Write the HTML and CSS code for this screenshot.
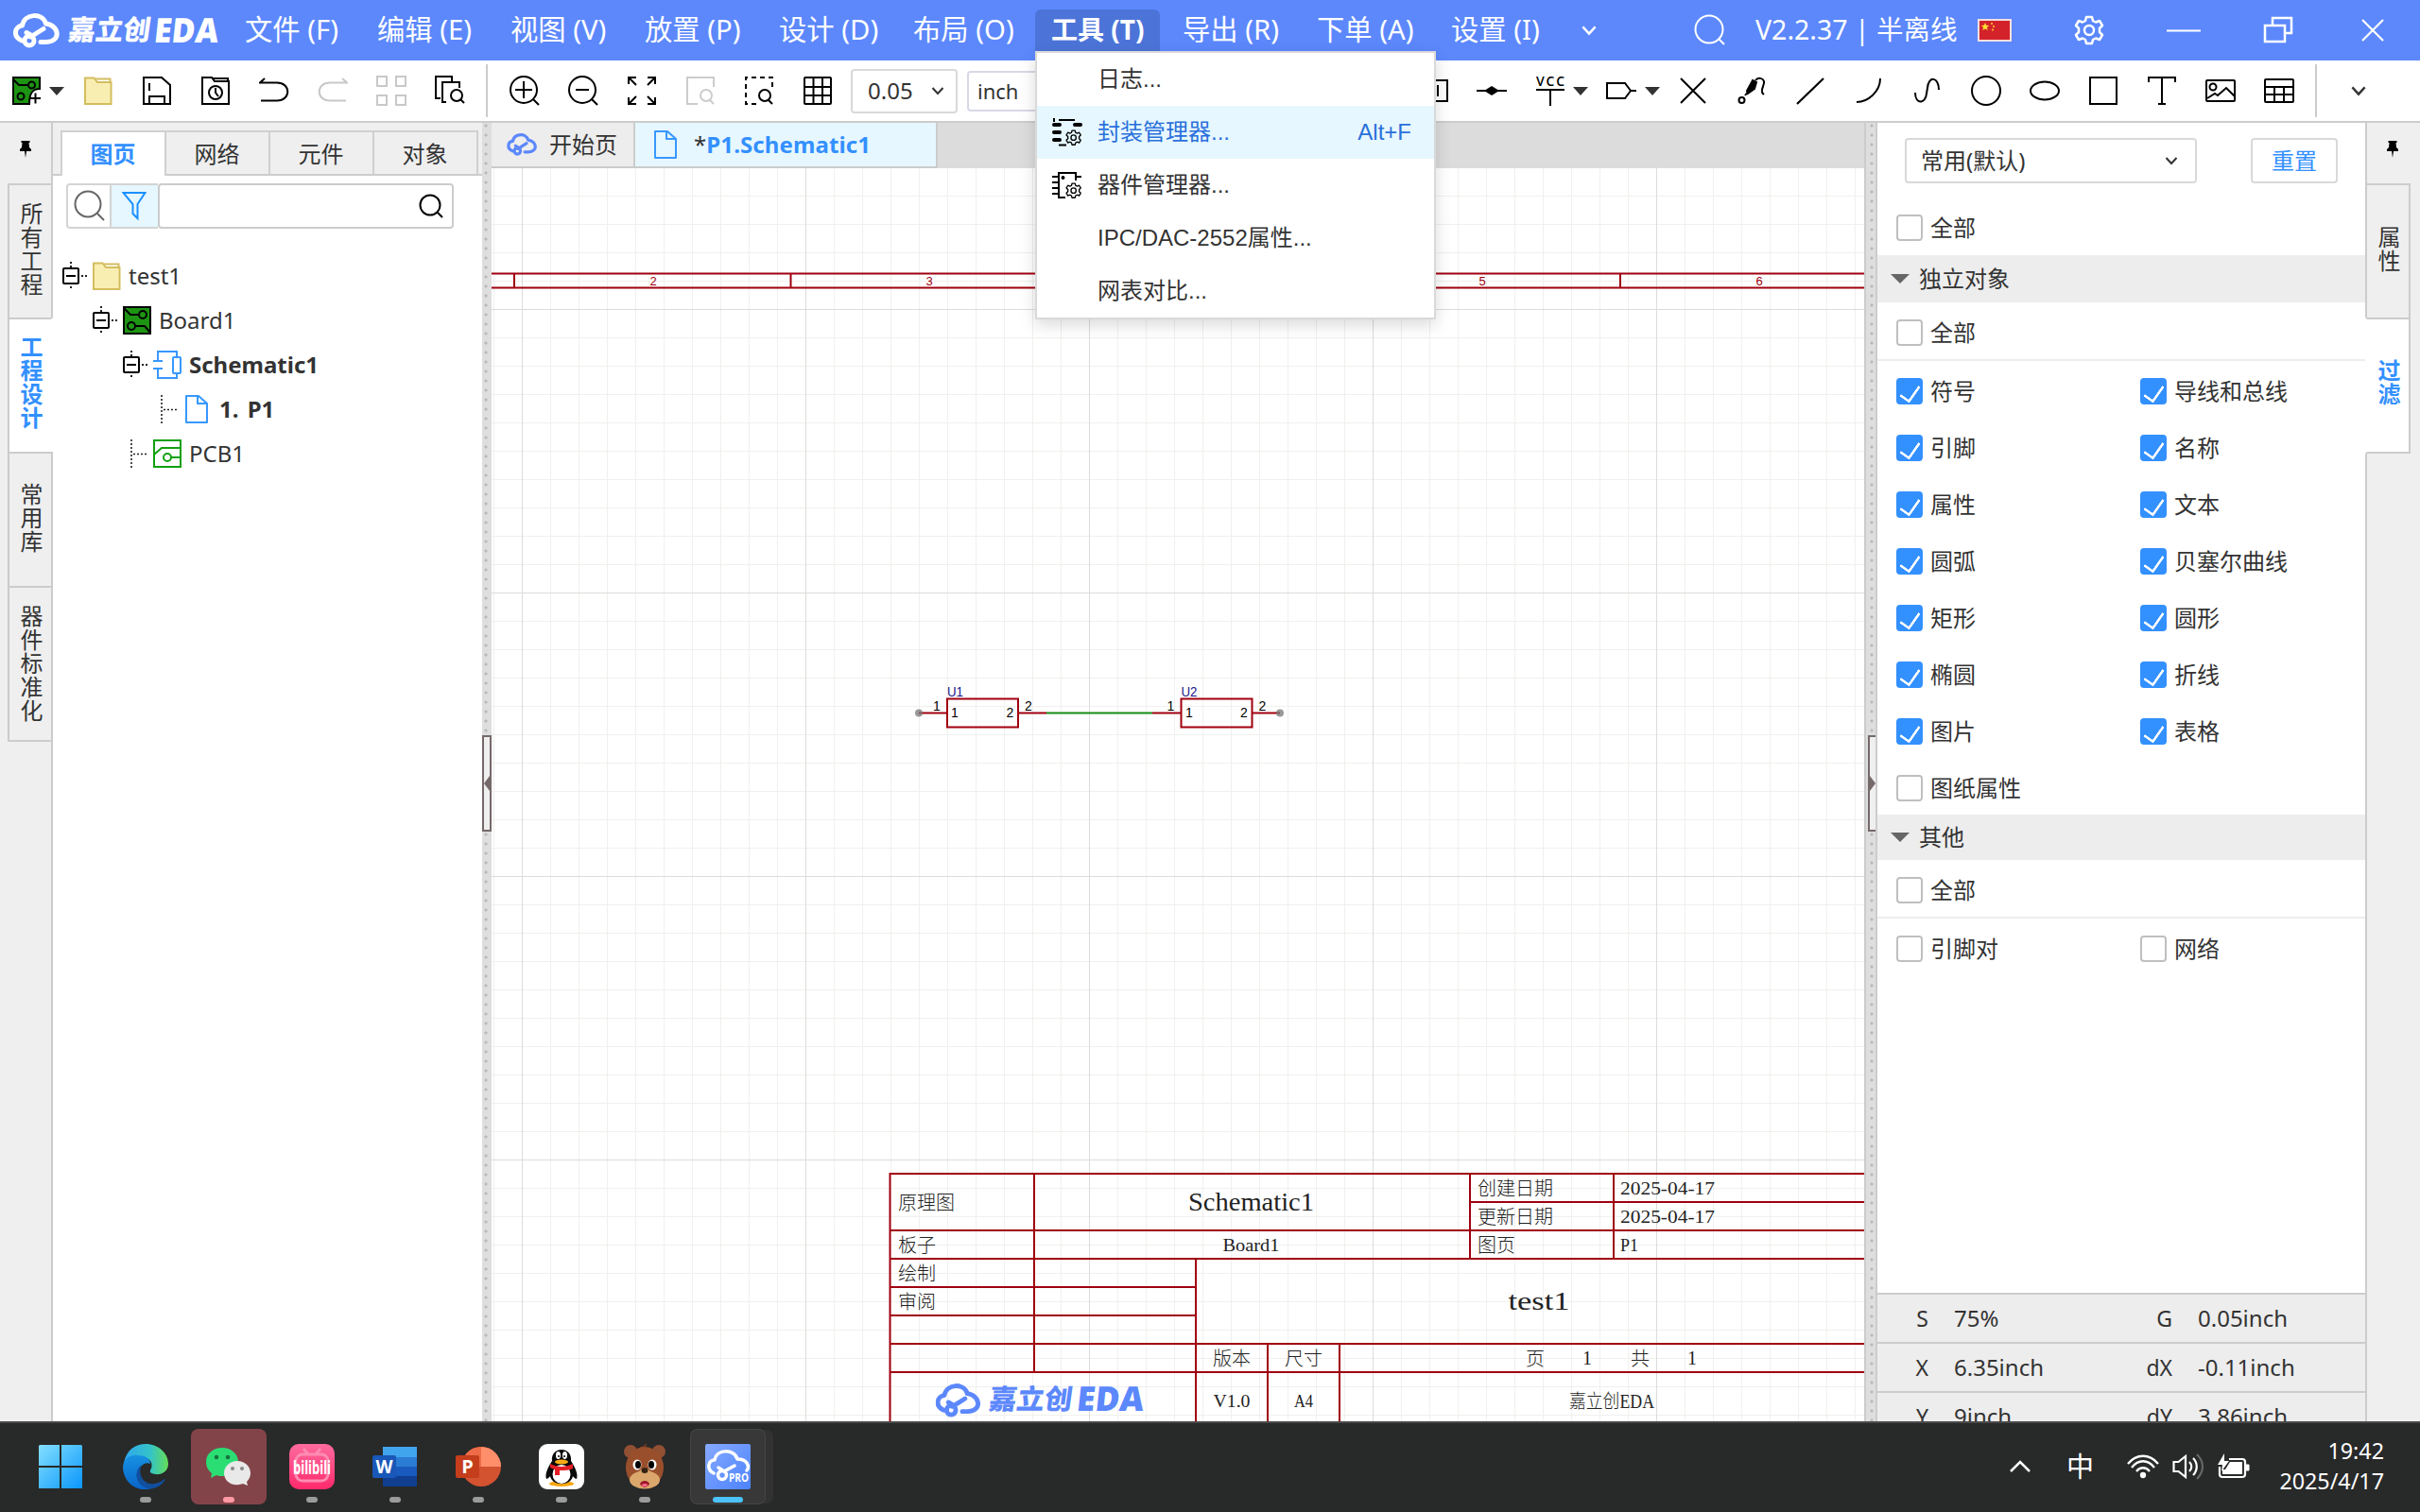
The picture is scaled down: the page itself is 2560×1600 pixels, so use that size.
FILE: index.html
```html
<!DOCTYPE html>
<html lang="zh-CN">
<head>
<meta charset="utf-8">
<title>嘉立创EDA</title>
<link rel="stylesheet" href="styles.css">
</head>
<body>
<svg class="defs" width="0" height="0" aria-hidden="true">
  <symbol id="cloud" viewBox="0 0 50 37">
    <g fill="none" stroke="currentColor" stroke-width="5" stroke-linecap="round" stroke-linejoin="round">
      <path d="M9 29C-.5 25 1 14 9.500 13C12 0 31 -1 34.500 11C49 13 51 30 35 30.500L29 30.500"/>
      <circle cx="17" cy="29" r="5"/><path d="M14 20.500L20 24L32 16.500M18 25L20 24"/>
    </g>
  </symbol>
  <symbol id="folder" viewBox="0 0 30 30"><path d="M1 29V1.500h9.500L14 6h14.500v23z" fill="#f9eeb2" stroke="#d4bd5e" stroke-width="2"/><path d="M12 2.500h15.500V6M14 6h14" fill="none" stroke="#d4bd5e" stroke-width="2"/></symbol>
  <symbol id="page" viewBox="0 0 24 30"><path d="M1 1h13l9 8v20H1zM13 1v8h10" fill="none" stroke="#3798ff" stroke-width="2" stroke-linejoin="round"/></symbol>
  <symbol id="node" viewBox="0 0 28 30"><rect x="1" y="7" width="16" height="16" rx="1" fill="none" stroke="#000" stroke-width="2"/><path d="M4 15h10" stroke="#000" stroke-width="2"/><path d="M9 0v6M9 26v4M20 15h8" stroke="#222" stroke-width="2" stroke-dasharray="2 2"/></symbol>
  <symbol id="leaf" viewBox="0 0 28 30"><path d="M9 0v30M11 15.500h16" stroke="#222" stroke-width="1.600" stroke-dasharray="2 2"/></symbol>
  <symbol id="gear" viewBox="0 0 32 32"><path d="M13 2h6l1 4 3 1.500 4-1.500 3 5-3 3v4l3 3-3 5-4-1.500-3 1.500-1 4h-6l-1-4-3-1.500L5 26l-3-5 3-3v-4l-3-3 3-5 4 1.500L12 6z" fill="none" stroke="currentColor" stroke-width="2.500" stroke-linejoin="round"/><circle cx="16" cy="16" r="5" fill="none" stroke="currentColor" stroke-width="2.500"/></symbol>
  <symbol id="pin" viewBox="0 0 12 18"><path d="M1.500 0h9v2H9.500l.5 5 2 2v2H7l-1 7-1-7H0V9l2-2 .5-5H1.500z" fill="#000"/></symbol>
  <symbol id="down" viewBox="0 0 14 10"><path d="M1.500 2l5.500 6 5.500-6" fill="none" stroke="currentColor" stroke-width="2"/></symbol>
</svg>

<header class="titlebar">
  <div class="brand">
    <svg width="50" height="37"><use href="#cloud"/></svg>
    <svg class="brand-text" width="170" height="56"><text transform="translate(7 38) skewX(-8)" textLength="87" lengthAdjust="spacingAndGlyphs">嘉立创</text><text class="en" transform="translate(98 41) skewX(-6)" textLength="68" lengthAdjust="spacingAndGlyphs">EDA</text></svg>
  </div>
  <nav class="menus">
    <span>文件 (F)</span><span>编辑 (E)</span><span>视图 (V)</span><span>放置 (P)</span><span>设计 (D)</span><span>布局 (O)</span><span class="open">工具 (T)</span><span>导出 (R)</span><span>下单 (A)</span><span>设置 (I)</span>
    <svg width="18" height="12"><use href="#down"/></svg>
  </nav>
  <div class="window-tools">
    <svg width="34" height="34" fill="none" stroke="#fff" stroke-width="2"><circle cx="16" cy="16" r="14.500"/><path d="M26 26l6 6"/></svg>
    <span class="version">V2.2.37 | 半离线</span>
    <svg class="flag" width="36" height="24"><rect width="36" height="24" fill="#f4dede"/><rect x="2" y="2" width="32" height="20" fill="#d3222a"/><path d="M8 4l1.200 2.800 3 .2-2.300 2 .8 3L8 10.400 5.300 12l.8-3-2.300-2 3-.2z" fill="#fd3"/><path d="M14 4h2v2h-2zM16 7h2v2h-2zM15 10.500h2v2h-2z" fill="#f7a72f"/></svg>
    <svg class="cog" width="32" height="32"><use href="#gear"/></svg>
    <svg class="min" width="36" height="3"><path d="M0 1.500h36" stroke="#fff" stroke-width="2"/></svg>
    <svg class="restore" width="32" height="30" fill="none" stroke="#fff" stroke-width="2.500"><path d="M2 10h21v17H2zM10 9V2h20v16h-6"/></svg>
    <svg class="close" width="24" height="24" stroke="#fff" stroke-width="2.200"><path d="M1 1l22 22M23 1L1 23"/></svg>
  </div>
</header>

<div class="toolbar">
  <div class="tools first">
    <svg width="30" height="30"><path d="M1 1h28v12c-8 0-11 5-11 16H1z" fill="#1d9412" stroke="#000" stroke-width="2"/><g fill="none" stroke="#000" stroke-width="2"><path d="M1 3l6 6h10"/><circle cx="20.500" cy="9" r="3.500"/><circle cx="9" cy="21" r="3.500"/></g><path d="M19 23h11M24.500 17.500v11" stroke="#000" stroke-width="2"/></svg>
    <i class="caret board-caret"></i>
    <svg width="30" height="30"><use href="#folder"/></svg>
    <svg width="30" height="30" fill="none" stroke="#000" stroke-width="2"><path d="M1 1h19l9 8v20H1zM7 29v-8h16v8M7 7v8"/></svg>
    <svg width="30" height="30" fill="none" stroke="#000" stroke-width="2"><path d="M1 29V1h10l3 4h15v24zM12 2h16v4"/><circle cx="15" cy="17" r="7"/><path d="M15 12v5l3 4"/></svg>
    <svg width="32" height="28" fill="none" stroke="#000" stroke-width="2"><path d="M6 1L1 5.500h18c15 0 15 19 0 19H2"/></svg>
    <svg width="32" height="28" fill="none" stroke="#c8c8c8" stroke-width="2"><path d="M26 1l5 4.500H13c-15 0-15 19 0 19h17"/></svg>
    <svg width="32" height="32" fill="none" stroke="#c8c8c8" stroke-width="2"><path d="M1 1h10v10H1zM21 1h10v10H21zM1 21h10v10H1zM21 21h10v10H21z"/></svg>
    <svg width="32" height="32" fill="none" stroke="#000" stroke-width="2"><path d="M6 24H1V1h17v5M12 28H8V7h18v6"/><circle cx="23" cy="21" r="6"/><path d="M27 25l4 4"/></svg>
  </div>
  <b class="rule"></b>
  <div class="tools view">
    <svg width="32" height="32" fill="none" stroke="#000" stroke-width="2"><circle cx="15" cy="15" r="14"/><path d="M6 15h18M15 6v18M25 25l6 6"/></svg>
    <svg width="32" height="32" fill="none" stroke="#000" stroke-width="2"><circle cx="15" cy="15" r="14"/><path d="M8 15h14M25 25l6 6"/></svg>
    <svg width="30" height="30" fill="none" stroke="#000" stroke-width="2"><path d="M1 8V1h8M1 1l8 8M21 1h8v7M29 1l-8 8M1 22v7h8M1 29l8-8M21 29h8v-7M29 29l-8-8"/></svg>
    <svg width="30" height="30" fill="none" stroke="#ccc" stroke-width="2"><path d="M12 29H1V1h28v10"/><circle cx="21" cy="20" r="6"/><path d="M25 25l4 4"/></svg>
    <svg width="30" height="30" fill="none" stroke="#000" stroke-width="2"><path d="M12 29H1V1h28v13" stroke-dasharray="5 4"/><circle cx="21" cy="20" r="6"/><path d="M25 25l4 4"/></svg>
    <svg width="30" height="30" fill="none" stroke="#000" stroke-width="2"><rect x="1" y="1" width="28" height="28" rx="1"/><path d="M1 11h28M1 20h28M10.500 1v28M20 1v28"/></svg>
  </div>
  <div class="field grid-size">0.05<svg width="14" height="10"><use href="#down"/></svg></div>
  <div class="field unit">inch</div>
  <div class="tools draw">
    <svg class="part" width="32" height="24" fill="none" stroke="#000" stroke-width="2"><path d="M1 1h30v22H1zM21 6v12"/></svg>
    <svg width="32" height="32"><path d="M0 16h32" stroke="#000" stroke-width="2"/><path d="M8 16l8-5 8 5-8 5z" fill="#000"/></svg>
    <svg class="nudge6" width="32" height="34"><text x="1" y="12" class="vcc" textLength="30">VCC</text><path d="M1 16h30M16 16v17" stroke="#000" stroke-width="2"/></svg>
    <i class="caret"></i>
    <svg class="nudge10" width="32" height="32" fill="none" stroke="#000" stroke-width="2"><path d="M1 8h19l6 8-6 8H1zM26 16h6"/></svg>
    <i class="caret"></i>
    <svg class="nudge5" width="28" height="28" stroke="#000" stroke-width="2"><path d="M1 1l26 26M27 1L1 27"/></svg>
    <svg width="32" height="32" fill="none" stroke="#000" stroke-width="2"><circle cx="5.500" cy="26" r="3"/><path d="M9 21l4-5M20 5C23 1 28 3 29 6c1 4-3 7-2 11 0 2 1 2 2 3"/><path d="M17 5l4 2-2 7-7 5-1-3z" fill="#000"/></svg>
    <svg width="30" height="30"><path d="M1 29L29 2" stroke="#000" stroke-width="2.200"/></svg>
    <svg width="28" height="28" fill="none" stroke="#000" stroke-width="2"><path d="M1 26C13 26 26 15 26 1"/></svg>
    <svg width="28" height="28" fill="none" stroke="#000" stroke-width="2"><path d="M1 16c0 13 11 12 12 1l1-6C15-2 26-1 26 13"/></svg>
    <svg width="32" height="32" fill="none" stroke="#000" stroke-width="2"><circle cx="16" cy="16" r="15"/></svg>
    <svg width="32" height="32" fill="none" stroke="#000" stroke-width="2"><ellipse cx="16" cy="16" rx="15" ry="9.500"/></svg>
    <svg width="30" height="30" fill="none" stroke="#000" stroke-width="2"><path d="M1 1h28v28H1z"/></svg>
    <svg width="30" height="30" fill="none" stroke="#000" stroke-width="2"><path d="M1 6V1h28v5M15 1v28M11 29h8"/></svg>
    <svg width="32" height="26" fill="none" stroke="#000" stroke-width="2"><rect x="1" y="2" width="30" height="22" rx="1"/><circle cx="8" cy="9" r="3.500"/><path d="M2 21l8-5 3 2 9-8 9 9"/></svg>
    <svg width="32" height="28" fill="none" stroke="#000" stroke-width="2"><rect x="1" y="2" width="30" height="24" rx="1"/><path d="M1 10h30M1 18h30M11 10v16M21 10v16"/></svg>
  </div>
  <b class="rule"></b>
  <svg class="more" width="18" height="12"><use href="#down"/></svg>
</div>

<main class="workspace">
  <aside class="rail left-rail">
    <div class="pin"><svg width="12" height="18"><use href="#pin"/></svg></div>
    <div class="vtab">所有工程</div><div class="vtab on">工程设计</div><div class="vtab">常用库</div><div class="vtab tall">器件标准化</div>
    <div class="rest"></div>
  </aside>

  <section class="project">
    <div class="ptabs"><span class="on">图页</span><span>网络</span><span>元件</span><span>对象</span></div>
    <div class="filter">
      <span class="find"><svg width="34" height="34" fill="none" stroke="#666" stroke-width="2"><circle cx="15" cy="15" r="13.500"/><path d="M25 25l7 7"/></svg></span>
      <span class="funnel"><svg width="26" height="32" fill="none" stroke="#1b90ff" stroke-width="2"><path d="M1.500 2h23l-8 12v15l-5-5V14z"/></svg></span>
      <span class="query"><svg width="26" height="26" fill="none" stroke="#000" stroke-width="2"><circle cx="12" cy="12" r="10.500"/><path d="M19 19l6 6"/></svg></span>
    </div>
    <ul class="tree">
      <li><svg width="28" height="30"><use href="#node"/></svg><svg class="ico" width="30" height="30"><use href="#folder"/></svg>test1</li>
      <li class="l1"><svg width="28" height="30"><use href="#node"/></svg><svg class="ico" width="30" height="30" fill="none" stroke="#000" stroke-width="2"><path d="M1 1h28v28H1z" fill="#1d9412"/><path d="M1 2l7 7h9M29 28l-6-7H13"/><circle cx="21" cy="9" r="4"/><circle cx="9" cy="21" r="4"/></svg>Board1</li>
      <li class="l2 strong"><svg width="28" height="30"><use href="#node"/></svg><svg class="ico" width="30" height="30" fill="none" stroke="#3798ff" stroke-width="2"><path d="M5 11V1h20v6M5 19v10h20v-5M0 11h10M0 19h10"/><rect x="21" y="7" width="8" height="17" rx="1"/></svg>Schematic1</li>
      <li class="l3 strong"><svg width="28" height="30"><use href="#leaf"/></svg><svg class="ico leafpage" width="24" height="30"><use href="#page"/></svg>1. P1</li>
      <li class="l2"><svg width="28" height="30"><use href="#leaf"/></svg><svg class="ico" width="30" height="30" fill="none" stroke="#11a00f" stroke-width="2"><path d="M1 1h28v28H1zM1 16l8-7h20M19 19h10"/><circle cx="15" cy="19" r="4"/></svg>PCB1</li>
    </ul>
  </section>

  <div class="splitter"><div class="grip"><svg width="6" height="16"><path d="M6 0v16L0 8z" fill="#75696a"/></svg></div></div>

  <section class="editor">
    <div class="docs">
      <div class="doc home"><svg width="33" height="24"><use href="#cloud"/></svg>开始页</div>
      <div class="doc current"><svg width="24" height="30"><use href="#page"/></svg><span><em>*</em>P1.Schematic1</span></div>
    </div>
    <svg class="sheet" width="1452" height="1326" viewBox="520 178 1452 1326">
      <defs>
        <pattern id="minor" x="522" y="207" width="30" height="30" patternUnits="userSpaceOnUse"><path d="M.5 0v30M0 .5h30" stroke="#f0f0ee"/></pattern>
        <pattern id="major" x="552" y="327" width="300" height="300" patternUnits="userSpaceOnUse"><path d="M.5 0v300M0 .5h300" stroke="#dcdcda"/></pattern>
      </defs>
      <rect x="520" y="178" width="1452" height="1326" fill="#fff"/>
      <rect x="520" y="178" width="1452" height="1326" fill="url(#minor)"/>
      <rect x="520" y="178" width="1452" height="1326" fill="url(#major)"/>
      <g class="frame">
        <path d="M520 289.500H1972M520 304.500H1972M544 289.500v15M836.500 289.500v15M1129 289.500v15M1421.500 289.500v15M1714 289.500v15"/>
        <g class="zone"><text x="691" y="302">2</text><text x="983" y="302">3</text><text x="1568" y="302">5</text><text x="1861" y="302">6</text></g>
      </g>
      <g class="part-lines"><path d="M1002 739.500h75v30h-75zM1249.500 739.500h75v30h-75zM972 754.500h30M1077 754.500h30M1219 754.500h30M1324 754.500h30"/></g>
      <path d="M1107 754.500H1219" stroke="#128c12" stroke-width="2"/>
      <g fill="#777" fill-opacity=".75"><circle cx="972" cy="754.500" r="4"/><circle cx="1354" cy="754.500" r="4"/></g>
      <g class="ref"><text x="1002" y="737" textLength="17" lengthAdjust="spacingAndGlyphs">U1</text><text x="1249.500" y="737" textLength="17" lengthAdjust="spacingAndGlyphs">U2</text></g>
      <g class="pinno"><text x="987" y="752">1</text><text x="1006" y="759">1</text><text x="1064.500" y="759">2</text><text x="1084" y="752">2</text><text x="1234.500" y="752">1</text><text x="1254" y="759">1</text><text x="1312" y="759">2</text><text x="1331.500" y="752">2</text></g>
      <g class="block">
        <path d="M940.500 1242H1972M1555 1272H1972M940.500 1302H1972M940.500 1332H1972M940.500 1362H1265M940.500 1392H1265M940.500 1422H1972M940.500 1452H1972M941.500 1242V1504M1094 1242V1452M1265 1332V1504M1341 1422V1504M1417 1422V1504M1555 1242V1332M1707 1242V1332"/>
        <g class="cn"><text x="950" y="1280">原理图</text><text x="950" y="1325">板子</text><text x="950" y="1355">绘制</text><text x="950" y="1385">审阅</text><text x="1563" y="1265">创建日期</text><text x="1563" y="1295">更新日期</text><text x="1563" y="1325">图页</text></g>
        <g class="cn mid"><text x="1303" y="1445">版本</text><text x="1379" y="1445">尺寸</text><text x="1624" y="1445">页</text><text x="1735" y="1445">共</text><text x="1679" y="1444">1</text><text x="1790" y="1444">1</text><text x="1705" y="1490" textLength="90" lengthAdjust="spacingAndGlyphs">嘉立创EDA</text></g>
        <g class="val"><text x="1714" y="1264" textLength="100" lengthAdjust="spacingAndGlyphs">2025-04-17</text><text x="1714" y="1294" textLength="100" lengthAdjust="spacingAndGlyphs">2025-04-17</text><text x="1714" y="1324" textLength="19" lengthAdjust="spacingAndGlyphs">P1</text></g>
        <g class="val mid"><text x="1323.500" y="1324" textLength="60" lengthAdjust="spacingAndGlyphs">Board1</text><text x="1303" y="1489" textLength="39" lengthAdjust="spacingAndGlyphs">V1.0</text><text x="1379" y="1489" textLength="20" lengthAdjust="spacingAndGlyphs">A4</text></g>
        <g class="big mid"><text x="1323.500" y="1281" textLength="133" lengthAdjust="spacingAndGlyphs">Schematic1</text><text x="1628" y="1386" textLength="65" lengthAdjust="spacingAndGlyphs">test1</text></g>
        <svg class="mark" x="989" y="1464" width="50" height="36" viewBox="0 0 50 37"><use href="#cloud"/></svg>
        <g class="logo-text"><text transform="translate(1045 1491) skewX(-8)" textLength="88" lengthAdjust="spacingAndGlyphs">嘉立创</text><text class="en" transform="translate(1138 1493) skewX(-6)" textLength="71" lengthAdjust="spacingAndGlyphs">EDA</text></g>
      </g>
    </svg>
  </section>

  <div class="splitter right"><div class="grip"><svg width="6" height="16"><path d="M0 0v16l6-8z" fill="#75696a"/></svg></div></div>

  <section class="inspector">
    <div class="preset"><div class="select">常用(默认)<svg width="14" height="10"><use href="#down"/></svg></div><div class="reset">重置</div></div>
    <div class="check top"><i></i>全部</div>
    <h3><i class="caret"></i>独立对象</h3>
    <div class="check all"><i></i>全部</div>
    <div class="checks">
      <div class="check"><i class="y"></i>符号</div><div class="check"><i class="y"></i>导线和总线</div>
      <div class="check"><i class="y"></i>引脚</div><div class="check"><i class="y"></i>名称</div>
      <div class="check"><i class="y"></i>属性</div><div class="check"><i class="y"></i>文本</div>
      <div class="check"><i class="y"></i>圆弧</div><div class="check"><i class="y"></i>贝塞尔曲线</div>
      <div class="check"><i class="y"></i>矩形</div><div class="check"><i class="y"></i>圆形</div>
      <div class="check"><i class="y"></i>椭圆</div><div class="check"><i class="y"></i>折线</div>
      <div class="check"><i class="y"></i>图片</div><div class="check"><i class="y"></i>表格</div>
      <div class="check"><i></i>图纸属性</div>
    </div>
    <h3 class="second"><i class="caret"></i>其他</h3>
    <div class="check all"><i></i>全部</div>
    <div class="checks"><div class="check"><i></i>引脚对</div><div class="check"><i></i>网络</div></div>
    <div class="readout">
      <div><b>S</b><span>75%</span><b>G</b><span>0.05inch</span></div>
      <div><b>X</b><span>6.35inch</span><b>dX</b><span>-0.11inch</span></div>
      <div><b>Y</b><span>9inch</span><b>dY</b><span>3.86inch</span></div>
    </div>
  </section>

  <aside class="rail right-rail">
    <div class="pin"><svg width="12" height="18"><use href="#pin"/></svg></div>
    <div class="vtab">属性</div><div class="vtab on">过滤</div>
    <div class="rest"></div>
  </aside>
</main>

<div class="dropdown">
  <div>日志...</div>
  <div class="hot"><svg width="34" height="30" fill="none" stroke="#000"><path d="M3 0v4M8 2h17" stroke-width="2"/><path d="M3 7h6M25 7h6M3 15h6M3 23h6" stroke-width="4" stroke-linecap="round"/><path d="M8 28.500h8" stroke-width="2"/><g transform="translate(15 12) scale(.54)"><use href="#gear" width="32" height="32"/></g></svg>封装管理器...<kbd>Alt+F</kbd></div>
  <div><svg width="34" height="30" fill="none" stroke="#000" stroke-width="2"><path d="M15 28H8V2h18v8M1 6h7M1 12h7M1 18h7M1 24h7M26 6h6"/><circle cx="12.500" cy="7" r="1"/><g transform="translate(15 12) scale(.54)"><use href="#gear" width="32" height="32"/></g></svg>器件管理器...</div>
  <div>IPC/DAC-2552属性...</div>
  <div>网表对比...</div>
</div>

<footer class="taskbar">
  <div class="apps">
    <div class="app start"><svg width="46" height="46"><defs><linearGradient id="win" x1="0" y1="0" x2="46" y2="46" gradientUnits="userSpaceOnUse"><stop stop-color="#84e0ff"/><stop offset="1" stop-color="#0a96fb"/></linearGradient></defs><path d="M1 0h21v22H0V1zM24 0h21l1 1v21H24zM0 24h22v22H0zM24 24h22v22H24z" fill="url(#win)"/></svg></div>
    <div class="app run"><svg width="48" height="48"><defs><linearGradient id="e1"><stop stop-color="#2fa6ee"/><stop offset=".6" stop-color="#35c3c8"/><stop offset="1" stop-color="#64dd55"/></linearGradient><linearGradient id="e2" x2="0" y2="1"><stop stop-color="#1792e2"/><stop offset="1" stop-color="#0964c8"/></linearGradient></defs><path d="M1 20C4 6 13 0 24 0c14 0 24 10 24 21 0 8-7 12-14 11-6-1-6-3-4-6 3-8-5-13-13-13C9 13 4 17 1 20z" fill="url(#e1)"/><path d="M0 24C1 15 8 11 16 12c9 0 13 5 13 9-7-3-12 4-12 10 0 8 6 14 14 16C14 52 0 40 0 24z" fill="url(#e2)"/><path d="M20 22c-5 10 2 22 14 20 5-1 8-3 10-5 1 0 1 1 0 2-5 7-12 9-18 8-13-3-15-19-6-25z" fill="#114f9f"/></svg></div>
    <div class="app run alert"><svg width="48" height="42"><path d="M17 1c9 0 17 6 17 15S26 31 17 31c-2 0-4 0-6-1l-6 3 1-5C2 25 0 21 0 16 0 7 8 1 17 1z" fill="#2ade74"/><circle cx="11" cy="11" r="2.300" fill="#16743c"/><circle cx="23" cy="11" r="2.300" fill="#16743c"/><path d="M33 15c8 0 14 6 14 13 0 4-2 7-4 9l1 4-5-2c-12 4-20-3-20-11 0-7 6-13 14-13z" fill="#e9e9e9"/><circle cx="28" cy="23" r="2" fill="#888"/><circle cx="38" cy="23" r="2" fill="#888"/></svg></div>
    <div class="app run"><svg width="48" height="48"><defs><linearGradient id="b" x2="0" y2="1"><stop stop-color="#ff6b9f"/><stop offset="1" stop-color="#ff2a6c"/></linearGradient></defs><rect width="48" height="48" rx="10" fill="url(#b)"/><rect x="7" y="11" width="34" height="28" rx="7" fill="none" stroke="#ff8cb2" stroke-width="3"/><path d="M15 5l5 6M33 5l-5 6" stroke="#ff8cb2" stroke-width="3"/><text x="4" y="32" class="bili" textLength="40" lengthAdjust="spacingAndGlyphs">bilibili</text></svg></div>
    <div class="app run"><svg width="48" height="42"><path d="M11 0h36v11H11z" fill="#41a5ee"/><path d="M11 11h36v10H11z" fill="#2b7cd3"/><path d="M11 21h36v10H11z" fill="#185abd"/><path d="M11 31h36v11H11z" fill="#103f91"/><rect y="9" width="25" height="24" rx="2" fill="#1957b8"/><text x="12.500" y="28" class="office" textLength="18" lengthAdjust="spacingAndGlyphs">W</text></svg></div>
    <div class="app run"><svg width="48" height="42"><circle cx="27" cy="21" r="21" fill="#d35230"/><path d="M27 0a21 21 0 0 1 21 21H27z" fill="#ff8f6b"/><path d="M27 0v21H6A21 21 0 0 1 27 0z" fill="#ed6c47"/><rect y="9" width="25" height="24" rx="2" fill="#c43e1c"/><text x="12.500" y="28" class="office">P</text></svg></div>
    <div class="app run"><svg width="48" height="48"><rect width="48" height="48" rx="9" fill="#fff"/><ellipse cx="24" cy="42" rx="13" ry="3" fill="#f8a60f"/><path d="M14 18C12 2 36 2 34 18c4 6 8 14 6 19-2 0-4-3-4-3-2 11-22 11-24 0 0 0-2 3-4 3-2-5 2-13 6-19z" fill="#090909"/><ellipse cx="24" cy="32" rx="9.500" ry="10" fill="#fff"/><ellipse cx="20.500" cy="12" rx="2.500" ry="4" fill="#fff"/><ellipse cx="27.500" cy="12" rx="2.500" ry="4" fill="#fff"/><circle cx="21" cy="13" r="1"/><circle cx="27" cy="13" r="1"/><ellipse cx="24" cy="19" rx="7" ry="2.500" fill="#faab14"/><path d="M12 21c8 4 16 4 24 0v5c-4 2-9 2-14 2v5h-5v-6l-5-2z" fill="#e71d24"/></svg></div>
    <div class="app run"><svg width="46" height="48"><circle cx="8" cy="8" r="7" fill="#925033"/><circle cx="38" cy="8" r="7" fill="#925033"/><path d="M18 4c4 0 6-1 6-4" fill="none" stroke="#713921" stroke-width="2"/><ellipse cx="23" cy="25" rx="20" ry="22" fill="#9a4f2c"/><ellipse cx="23" cy="38" rx="16" ry="9.500" fill="#dba76c"/><path d="M10 34c5-1 9-9 13-9s8 8 13 9z" fill="#dba76c"/><ellipse cx="15" cy="22" rx="4.500" ry="5.500" fill="#fff"/><ellipse cx="31" cy="22" rx="4.500" ry="5.500" fill="#fff"/><ellipse cx="16" cy="22" rx="3" ry="4"/><ellipse cx="30" cy="22" rx="3" ry="4"/><ellipse cx="23" cy="28" rx="3.500" ry="3" fill="#321"/><path d="M18 42c2-4 8-4 10 0-2 5-8 5-10 0z" fill="#9c1729"/><ellipse cx="23" cy="43.500" rx="3" ry="1.500" fill="#ff6b8c"/></svg></div>
    <div class="app run active"><svg width="48" height="48"><defs><linearGradient id="eda" x2="1" y2="1"><stop stop-color="#86a9ff"/><stop offset="1" stop-color="#4c83fd"/></linearGradient></defs><rect width="48" height="48" rx="2" fill="url(#eda)"/><g fill="none" stroke="#fff" stroke-width="3.500" stroke-linecap="round" stroke-linejoin="round"><path d="M9 31C1 27 3 17 10 17 12 5 31 5 34 16c11 0 13 8 10 12"/><circle cx="18" cy="33" r="4.500"/><path d="M14 25l6 4 11-6"/></g><text x="25" y="40" class="pro" textLength="21" lengthAdjust="spacingAndGlyphs">PRO</text></svg></div>
  </div>
  <div class="tray">
    <svg class="up" width="24" height="14" fill="none" stroke="#fff" stroke-width="2.500"><path d="M2 12L12 2l10 10"/></svg>
    <span class="ime">中</span>
    <svg class="wifi" width="34" height="26" fill="none" stroke="#fff" stroke-width="2.300"><path d="M1 10C10-1 24-1 33 10M5 14c7-9 17-9 24 0M10 18c4-5 10-5 14 0"/><circle cx="17" cy="22" r="2" fill="#fff"/></svg>
    <svg class="vol" width="34" height="28" fill="none" stroke="#fff" stroke-width="2.200"><path d="M1.500 9h5L14 3v22l-7.500-6h-5zM18 9c3 3 3 7 0 10M22 5c5 5 5 13 0 18"/><path d="M26 1c8 8 8 18 0 26" stroke="#666"/></svg>
    <svg class="bat" width="34" height="28" fill="none" stroke="#fff" stroke-width="2.200"><path d="M12 6h14q3 0 3 3v13q0 3-3 3H5q-3 0-3-3V14"/><path d="M13 9h13v13H5v-5h3z" fill="#fff" stroke="none"/><path d="M30 12h3v6h-3z" fill="#fff" stroke="#fff" stroke-width="1"/><path d="M7 0L0 12h5l-1 7 8-11H7z" fill="#fff" stroke="none"/></svg>
    <div class="clock"><span>19:42</span><span>2025/4/17</span></div>
  </div>
</footer>
</body>
</html>
```
FILE: styles.css
```css
* { box-sizing: border-box; }

body {
  margin: 0;
  width: 2560px;
  height: 1600px;
  overflow: hidden;
  display: flex;
  flex-direction: column;
  position: relative;
  font: 24px/1 "Noto Sans", "Noto Sans CJK SC", sans-serif;
  color: #333;
  background: #fff;
}

svg { display: block; flex: none; }
.defs { position: absolute; }

/* title bar */
.titlebar {
  height: 64px;
  flex: none;
  display: flex;
  background: #5c88fc;
  color: #fff;
  font-size: 29.3px;
}
.brand { width: 259px; flex: none; padding-left: 14px; display: flex; align-items: center; }
.brand-text { overflow: visible; }
.brand-text, .logo-text { font: 900 29px "Noto Sans CJK SC", sans-serif; fill: #fff; }
.brand-text .en, .logo-text .en { font: 800 36px "Open Sans", sans-serif; }
.menus {
  display: grid;
  grid-template-columns: 140px 141px 142px 142px 142px 129px 132px 24px 142px 142px 137px 24px;
  align-items: center;
  padding-bottom: 1px;
  line-height: 1.3;
  white-space: nowrap;
}
.menus .open {
  align-self: start;
  margin-top: 10px;
  height: 44px;
  padding-left: 17px;
  line-height: 43px;
  border-radius: 6px 6px 0 0;
  background: #4c74d8;
  font-weight: 700;
  font-size: 28px;
}
.menus .open + span { grid-column: 9; }
.window-tools { margin-left: 96px; display: flex; align-items: center; }
.version { width: 234px; margin-left: 31px; padding-bottom: 1px; white-space: nowrap; font-size: 28.5px; }
.flag { margin-left: 1px; }
.cog { margin-left: 66px; }
.min { margin-left: 66px; }
.restore { margin-left: 66px; }
.close { margin-left: 72px; }

/* toolbar */
.toolbar {
  height: 66px;
  flex: none;
  display: flex;
  align-items: center;
  border-bottom: 2px solid #ccc;
  background: #fff;
}
.tools { display: grid; grid-auto-flow: column; grid-auto-columns: 62px; align-items: center; justify-items: center; }
.tools.first { margin-left: 13px; grid-template-columns: 30px 30px; width: 493px; }
.board-caret { justify-self: end; margin-right: 5px; }
.caret { display: block; border: 8px solid transparent; border-top: 9px solid #333; border-bottom: 0; }
.rule { width: 2px; height: 56px; background: #ccc; }
.first + .rule { margin-left: 8px; }
.draw + .rule { margin-left: 7px; }
.tools.view { margin-left: 8px; }
.field {
  flex: none;
  display: flex;
  align-items: center;
  border: 2px solid #d9d9d9;
  border-radius: 4px;
  color: #333;
}
.grid-size { margin-left: 4px; width: 113px; height: 47px; padding: 0 12px 0 16px; justify-content: space-between; }
.unit { margin-left: 10px; width: 100px; height: 43px; padding-left: 9px; border-color: #d7d8e6; font-size: 22px; }
.tools.draw { margin-left: 362px; grid-template-columns: 62px 62px 56px 14px 62px 14px 67px; }
.nudge5 { margin-left: 5px; }
.nudge6 { margin-left: 6px; }
.nudge10 { margin-left: 10px; }
.vcc { font: 600 14px "Open Sans", sans-serif; }
.more { margin-left: 35px; }

/* side rails */
.workspace { flex: 1; min-height: 0; display: flex; overflow: hidden; }
.rail { width: 56px; flex: none; display: flex; flex-direction: column; background: #efefef; }
.left-rail { padding-left: 8px; }
.rail.right-rail { width: 58px; padding-right: 10px; }
.rail .pin { height: 64px; padding: 19px 0 0 13px; }
.right-rail .pin { padding-left: 21px; }
.rail .pin, .rail .rest { border-right: 2px solid #ccc; }
.right-rail .pin, .right-rail .rest { border-right: 0; border-left: 2px solid #ccc; }
.rest { flex: 1; }
.vtab {
  height: 142px;
  flex: none;
  padding-bottom: 4px;
  border: 2px solid #ccc;
  border-bottom: 0;
  writing-mode: vertical-rl;
  text-orientation: upright;
  display: flex;
  align-items: center;
  justify-content: center;
  letter-spacing: 1px;
}
.vtab.tall { height: 165px; padding-bottom: 1px; border-bottom: 2px solid #ccc; }
.vtab.on { padding-bottom: 6px; background: #fff; border-right-color: #fff; color: #3390ff; font-weight: 700; }
.right-rail .vtab.on { height: 144px; border-right-color: #ccc; border-left-color: #fff; border-bottom: 2px solid #ccc; }

/* project tree */
.project { width: 454px; flex: none; background: #fff; }
.ptabs { height: 56px; padding: 8px 0 0 8px; display: flex; background: #efefef; border-bottom: 2px solid #ccc; }
.ptabs span {
  width: 110px;
  height: 46px;
  padding-right: 1px;
  border: 2px solid #d0d0d0;
  border-width: 2px 2px 0 0;
  text-align: center;
  line-height: 45px;
}
.ptabs .on { width: 112px; height: 48px; border-left-width: 2px; background: #fff; color: #3390ff; font-weight: 700; }
.filter { margin: 8px 0 0 14px; width: 410px; height: 48px; display: flex; }
.filter span { display: flex; align-items: center; border: 2px solid #d4d4d4; }
.find { width: 48px; padding-left: 6px; border-radius: 4px 0 0 4px; }
.funnel { width: 49px; padding-right: 2px; justify-content: center; background: #e6f7ff; }
.filter .funnel { border-left: 0; border-right: 0; }
.filter .query { width: 313px; justify-content: flex-end; padding-right: 9px; border-radius: 4px; border-color: #ccc; }
.tree { margin: 26px 0 0; padding: 0 0 0 10px; list-style: none; }
.tree li { height: 47px; display: flex; align-items: center; white-space: nowrap; line-height: 45px; }
.tree .ico { margin: 0 8px 0 4px; }
.tree .leafpage { margin: 0 12px 0 6px; }
.tree .l1 { padding-left: 32px; }
.tree .l2 { padding-left: 64px; }
.tree .l3 { padding-left: 96px; word-spacing: 3px; }
.strong { font-weight: 700; }

/* splitters */
.splitter {
  width: 10px;
  flex: none;
  display: flex;
  flex-direction: column;
  background: radial-gradient(circle at 4px 3px, #b9b9b9 1.3px, transparent 1.8px) 0 0 / 10px 10px, #dedede;
}
.splitter .grip {
  margin-top: 648px;
  height: 102px;
  display: flex;
  align-items: center;
  border: 2px solid #75696a;
  background: #efefef;
}
.splitter.right {
  width: 14px;
  padding-left: 4px;
  border-left: 2px solid #ccc;
  border-right: 2px solid #ccc;
  background-position: 2px 0;
  background-clip: padding-box;
}
.right .grip { margin-left: -2px; border-right: 0; }

/* editor */
.editor { width: 1452px; flex: none; }
.docs { height: 48px; display: flex; background: #dcdcdc; }
.doc { display: flex; align-items: center; border-right: 2px solid #ccc; border-bottom: 2px solid #ccc; }
.home { width: 152px; padding-left: 16px; gap: 12px; background: #ededed; }
.home svg { color: #5c88fc; }
.current { width: 320px; padding-left: 20px; gap: 18px; background: #e6f7ff; color: #3390ff; font-weight: 700; letter-spacing: .1px; }
.current em { font-style: normal; font-weight: 400; color: #333; }
.frame path, .part-lines path, .block path { fill: none; stroke: #a0000f; stroke-width: 2; }
.zone { font: 13px "Liberation Sans", sans-serif; fill: #a0000f; text-anchor: middle; }
.ref { font: 15px "Liberation Sans", sans-serif; fill: #15158a; }
.pinno { font: 14px "Liberation Sans", sans-serif; fill: #000; }
.cn { font: 300 20px "Liberation Serif", "Noto Sans CJK SC", sans-serif; fill: #222; }
.val { font: 19.5px "Liberation Serif", serif; fill: #222; }
.big { font: 27px "Liberation Serif", serif; fill: #222; }
.mid { text-anchor: middle; }
.block .mark { color: #5c88fc; }
.block .mark path { stroke: currentColor; }
.logo-text { fill: #5c88fc; }

/* inspector */
.inspector { width: 516px; flex: none; display: flex; flex-direction: column; background: #fff; }
.preset { height: 64px; padding: 16px 29px 0; display: flex; justify-content: space-between; }
.select, .reset { height: 48px; border: 2px solid #d9d9d9; border-radius: 4px; display: flex; align-items: center; }
.select { width: 309px; padding: 0 18px 0 15px; justify-content: space-between; }
.reset { width: 92px; justify-content: center; color: #3390ff; }
.check { display: flex; align-items: center; gap: 8px; white-space: nowrap; }
.check i { width: 28px; height: 28px; border: 2px solid #bfbfbf; border-radius: 4px; background: #fff; }
.check i.y { border-color: #3390ff; background: #3390ff; display: flex; justify-content: center; }
.check i.y::after {
  content: "";
  width: 10px;
  height: 18px;
  margin-top: 2px;
  border: solid #fff;
  border-width: 0 3px 3px 0;
  border-radius: 1px;
  transform: rotate(35deg);
}
.check.top { height: 58px; margin-top: 18px; padding-left: 20px; }
.inspector h3 {
  margin: 0;
  height: 50px;
  padding-left: 14px;
  display: flex;
  align-items: center;
  gap: 10px;
  font-weight: 400;
  font-size: 24px;
  background: #ededed;
}
.inspector h3 .caret { border-width: 10px 10px 0; border-top-color: #666; }
.inspector .second { height: 48px; margin-top: -2px; }
.check.all { height: 62px; padding: 3px 0 0 20px; border-bottom: 2px solid #ededed; }
.checks { padding: 2px 0 0 20px; display: grid; grid-template-columns: 258px 1fr; grid-auto-rows: 60px; }
.readout { margin-top: auto; height: 136px; overflow: hidden; background: #ededed; }
.readout div {
  height: 52px;
  border-top: 2px solid #ccc;
  display: grid;
  grid-template-columns: 54px 189px 69px 1fr;
  align-items: center;
}
.readout b { font-weight: 400; text-align: right; font-size: 23px; }
.readout span { padding-left: 27px; }

/* tools menu */
.dropdown {
  position: absolute;
  left: 1095px;
  top: 54px;
  width: 424px;
  height: 284px;
  border: 2px solid #d9d9d9;
  background: #fff;
  box-shadow: 0 6px 16px rgba(0, 0, 0, .15);
  font-family: "Liberation Sans", "Noto Sans CJK SC", sans-serif;
}
.dropdown div { height: 56px; padding-left: 64px; display: flex; align-items: center; }
.dropdown svg { margin: 0 15px 0 -49px; color: #000; }
.dropdown .hot { background: #e6f7ff; color: #2a70db; }
.dropdown kbd { margin-left: auto; padding-right: 24px; font: inherit; }

/* taskbar */
.taskbar {
  height: 96px;
  flex: none;
  display: flex;
  justify-content: space-between;
  border-top: 2px solid #4a4a4a;
  background: #282929;
}
.apps { display: flex; gap: 8px; padding: 6px 0 0 24px; }
.start { margin-right: 2px; }
.app {
  width: 80px;
  height: 80px;
  display: flex;
  flex-direction: column;
  align-items: center;
  justify-content: center;
  position: relative;
  border-radius: 8px;
}
.app.run::after {
  content: "";
  position: absolute;
  bottom: 2px;
  width: 12px;
  height: 6px;
  border-radius: 3px;
  background: #9b9b9b;
}
.app.alert { background: #834449; }
.app.alert::after { background: #ff99a4; }
.app.active { width: 70px; margin-left: 2px; background: #383838; box-shadow: inset 0 0 0 1px #444, 9px 0 0 -1px #323232; }
.app.active::after { width: 32px; background: #4cc2ff; }
.app.active { width: 80px; margin-left: 0; }
.bili { font: 700 19px "Noto Sans", sans-serif; fill: #fff; }
.office { font: 700 20px "Open Sans", sans-serif; fill: #fff; text-anchor: middle; }
.pro { font: 700 12px "Open Sans", sans-serif; fill: #fff; }
.tray { display: flex; align-items: center; padding-right: 38px; padding-bottom: 2px; color: #fff; }
.up { margin-right: 37px; }
.ime { font-size: 29px; width: 27px; padding-bottom: 2px; }
.wifi { margin-left: 37px; }
.vol { margin-left: 14px; }
.bat { margin-left: 14px; }
.clock { width: 142px; display: flex; flex-direction: column; gap: 9px; padding-bottom: 1px; align-items: flex-end; font-size: 23.3px; }
```
